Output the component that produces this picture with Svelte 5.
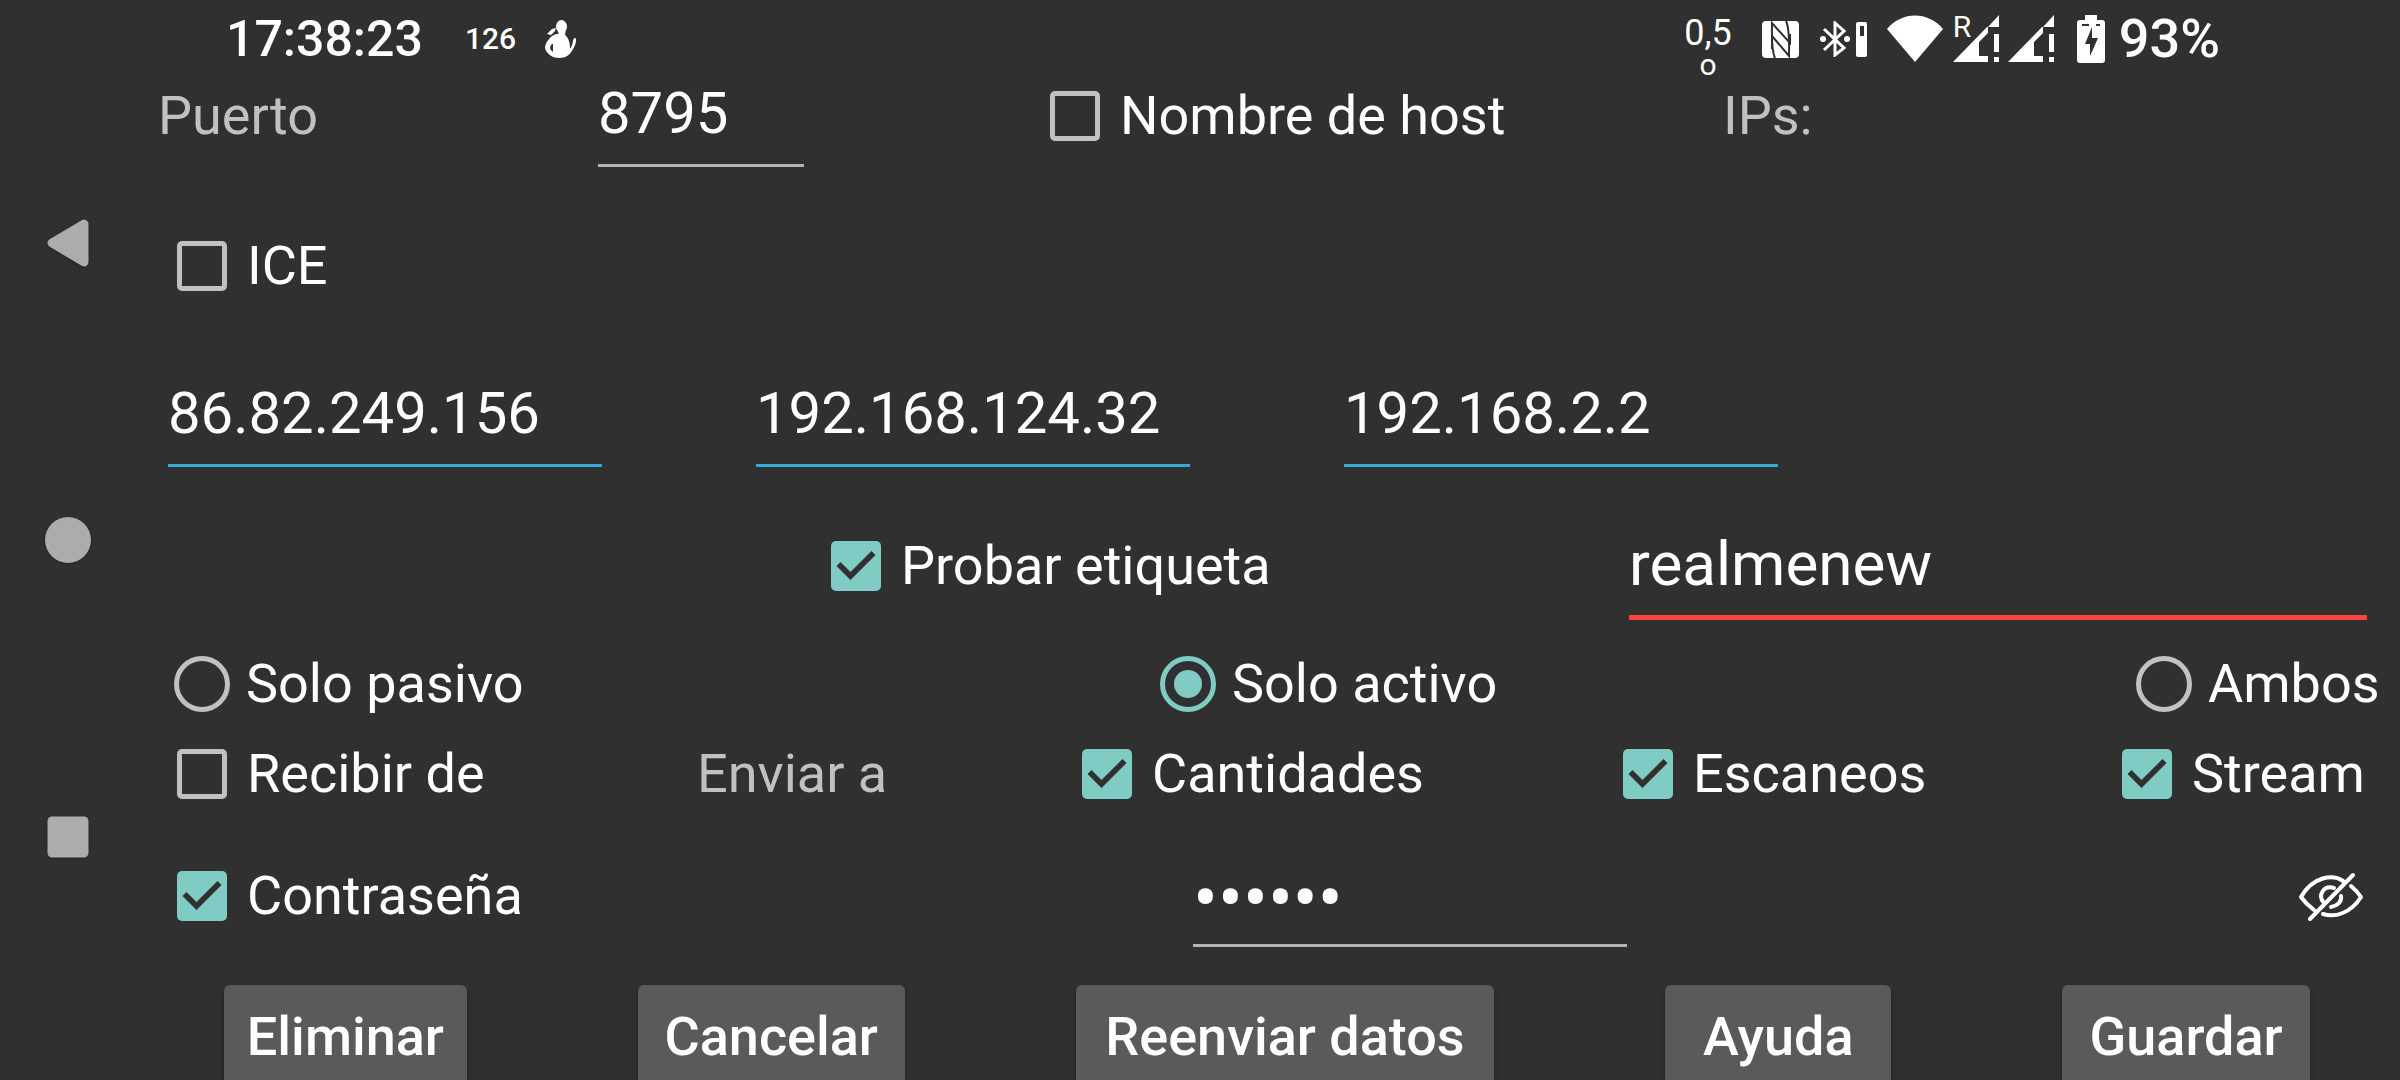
<script>
  let port = $state('8795');
  let hostname = $state(false);
  let ice = $state(false);
  let ips = $state(['86.82.249.156', '192.168.124.32', '192.168.2.2']);
  let testLabel = $state(true);
  let label = $state('realmenew');
  let mode = $state('active');
  let receive = $state(false);
  let amounts = $state(true);
  let scans = $state(true);
  let stream = $state(true);
  let usePassword = $state(true);
  let password = $state('secret');
  let reveal = $state(false);

  const modes = [
    { id: 'passive', text: 'Solo pasivo' },
    { id: 'active', text: 'Solo activo' },
    { id: 'both', text: 'Ambos' }
  ];
  const actions = ['Eliminar', 'Cancelar', 'Reenviar datos', 'Ayuda', 'Guardar'];
</script>

<div class="screen">
  <nav class="system-nav" aria-label="Sistema">
    <button aria-label="Atrás">
      <svg width="52" height="56" viewBox="0 0 52 56"><path d="M10 28 42 9v38z" /></svg>
    </button>
    <button aria-label="Inicio">
      <svg width="52" height="56" viewBox="0 0 52 56"><circle cx="26" cy="28" r="23" stroke="none" /></svg>
    </button>
    <button aria-label="Recientes">
      <svg width="52" height="56" viewBox="0 0 52 56"><path d="M10 12h32v32H10z" /></svg>
    </button>
  </nav>

  <main>
    <header class="status">
      <time>17:38:23</time>
      <span class="count">126</span>
      <svg class="cat" width="32" height="38" viewBox="0 0 32 38">
        <ellipse cx="17.500" cy="6.500" rx="5.500" ry="6.500" />
        <path d="M13 8h9l-1 7h-6z" />
        <path d="M12 14C6 16 1 23 1 28c1 5 7 10 14 10 7 0 11-3 14-9 3-4 4-11 2-11-3 0-1 6-5 11 0-8-2-12-6-15z" />
        <path d="M3 14 8 9l4-1-1 3-4 4z" />
        <path d="M8 24c-3 3-2 6 1 8V24z" fill="#303030" />
      </svg>

      <div class="speed"><span>0,5</span><span class="unit">o</span></div>
      <svg class="nfc" width="38" height="38" viewBox="0 0 38 38">
        <rect width="37" height="37" x="0" y="1" rx="4" />
        <path d="M13 38C9 30 10 12 10 3L28 23V14M24 1C28 9 27 26 27 36L10 16v13" fill="none" stroke="#303030" stroke-width="2" />
      </svg>
      <svg class="bt" width="48" height="36" viewBox="0 0 48 36">
        <path d="M4 8 24 27 15 34V2l9 8L4 29" fill="none" stroke="#fff" stroke-width="3" />
        <circle cx="3" cy="18" r="3" /><circle cx="27" cy="18" r="3" />
        <rect x="36" y="1" width="11" height="35" rx="2" />
        <path d="M40 5h4v10h-4z" fill="#303030" />
      </svg>
      <svg class="wifi" width="56" height="48" viewBox="0 0 56 48"><path d="M0 14C15-4 41-4 56 14L28 47z" /></svg>
      <div class="signal roaming">
        <span>R</span>
        <svg width="48" height="48" viewBox="0 0 48 48">
          <path d="M0 47 34 12h1v6L26 27v14h9v6zM46 0v12H35zM41 19h5v18h-5zM41 42h5v5h-5z" />
        </svg>
      </div>
      <div class="signal">
        <svg width="48" height="48" viewBox="0 0 48 48">
          <path d="M0 47 34 12h1v6L26 27v14h9v6zM46 0v12H35zM41 19h5v18h-5zM41 42h5v5h-5z" />
        </svg>
      </div>
      <svg class="battery" width="30" height="48" viewBox="0 0 30 48">
        <path d="M9 0h12v5h5q3 0 3 3v37q0 3-3 3H4q-3 0-3-3V8q0-3 3-3h5z" />
        <path d="M6 9h7v2H6zM20 9h4v2h-4zM16 12 9 29h5v12l8-18h-6z" fill="#303030" />
      </svg>
      <span class="percent">93%</span>
    </header>

    <form onsubmit={(e) => e.preventDefault()}>
      <div class="row port-row">
        <label class="caption" for="port">Puerto</label>
        <input id="port" class="field port" type="text" bind:value={port} />
        <label class="choice"><input type="checkbox" bind:checked={hostname} />Nombre de host</label>
        <span class="caption">IPs:</span>
      </div>

      <div class="row">
        <label class="choice"><input type="checkbox" bind:checked={ice} />ICE</label>
      </div>

      <div class="row ip-row">
        {#each ips as _, i}
          <input class="field ip" type="text" aria-label={`IP ${i + 1}`} bind:value={ips[i]} />
        {/each}
      </div>

      <div class="row label-row">
        <label class="choice"><input type="checkbox" bind:checked={testLabel} />Probar etiqueta</label>
        <input class="field name" type="text" aria-label="Etiqueta" spellcheck="false" bind:value={label} />
      </div>

      <div class="row mode-row">
        {#each modes as m}
          <label class="choice radio"><input type="radio" name="mode" value={m.id} bind:group={mode} />{m.text}</label>
        {/each}
      </div>

      <div class="row send-row">
        <label class="choice"><input type="checkbox" bind:checked={receive} />Recibir de</label>
        <span class="caption">Enviar a</span>
        <label class="choice"><input type="checkbox" bind:checked={amounts} />Cantidades</label>
        <label class="choice"><input type="checkbox" bind:checked={scans} />Escaneos</label>
        <label class="choice"><input type="checkbox" bind:checked={stream} />Stream</label>
      </div>

      <div class="row password-row">
        <label class="choice"><input type="checkbox" bind:checked={usePassword} />Contraseña</label>
        <input class="field secret" type={reveal ? 'text' : 'password'} aria-label="Contraseña" bind:value={password} />
        <button class="eye" type="button" aria-label="Mostrar contraseña" onclick={() => (reveal = !reveal)}>
          <svg width="64" height="50" viewBox="0 0 64 50">
            <g fill="none" stroke="#fff" stroke-width="4" stroke-linecap="round" stroke-linejoin="round">
              <path d="M11 48 54 4" />
              <path d="M15 39Q7 33 2 26C14 5 34 3 44 10" />
              <path d="M52 15Q58 20 62 26C52 42 36 47 24 43" />
              <path d="M25 32C18 24 25 14 35 17" />
              <path d="M42 25c1 6-4 10-10 11" />
            </g>
          </svg>
        </button>
      </div>

      <div class="actions">
        {#each actions as action}
          <button type="button">{action}</button>
        {/each}
      </div>
    </form>
  </main>
</div>

<style>
  :global(body) {
    background: #303030;
  }
  .screen {
    display: grid;
    grid-template: 100vh / 158px minmax(0, 1fr);
    overflow: hidden;
    background: #303030;
    color: #fff;
    font-family: Roboto, 'Noto Sans', sans-serif;
    font-size: 54px;
    white-space: nowrap;
  }
  button,
  input {
    margin: 0;
    padding: 0;
    border: 0;
    background: none;
    color: inherit;
    font: inherit;
  }
  svg {
    display: block;
    flex: none;
    fill: #fff;
  }

  .system-nav {
    display: flex;
    flex-direction: column;
    padding: 94px 22px 94px 0;
  }
  .system-nav button {
    flex: 1;
    display: grid;
    place-items: center;
  }
  .system-nav svg {
    fill: #acacac;
    stroke: #acacac;
    stroke-width: 9;
    stroke-linejoin: round;
    filter: drop-shadow(0 1px 1px #222);
  }

  main {
    min-width: 0;
  }
  .status {
    display: flex;
    align-items: center;
    height: 75px;
    box-sizing: border-box;
    padding: 3px 180px 0 68px;
  }
  time,
  .percent {
    line-height: 80px;
    font-weight: 500;
  }
  time {
    font-size: 50px;
  }
  .count {
    margin: 0 28px 0 42px;
    font-size: 30px;
    line-height: 80px;
    font-weight: 500;
  }
  .speed {
    display: flex;
    flex-direction: column;
    align-self: flex-start;
    align-items: center;
    margin-left: auto;
    padding-top: 14px;
    font-size: 36px;
    line-height: 32px;
  }
  .unit {
    font-size: 30px;
  }
  .nfc {
    margin-left: 30px;
  }
  .bt {
    margin-left: 20px;
  }
  .wifi {
    margin-left: 19px;
  }
  .signal {
    display: grid;
    margin-left: 7px;
  }
  .signal > * {
    grid-area: 1 / 1;
  }
  .roaming {
    margin-left: 10px;
  }
  .signal span {
    font-size: 30px;
    line-height: 24px;
  }
  .battery {
    margin: 0 13px 0 20px;
  }

  .row {
    display: grid;
    align-items: start;
    height: 150px;
  }
  .port-row {
    grid-template-columns: 440fr 433fr 692fr 677fr;
  }
  .ip-row {
    grid-template-columns: 588fr 588fr 1056fr;
    padding-left: 10px;
  }
  .label-row {
    grid-template-columns: 654fr 817fr 738fr;
    height: 118px;
    padding-right: 33px;
  }
  .label-row .choice {
    grid-column: 2;
  }
  .mode-row {
    grid-template-columns: 986fr 976fr 280fr;
    height: 90px;
  }
  .send-row {
    grid-template-columns: 539fr 366fr 541fr 499fr 297fr;
    height: 122px;
  }
  .password-row {
    grid-template-columns: 1035fr 1106fr 101fr;
    height: 130px;
  }

  .caption {
    color: #c1c1c1;
    line-height: 82px;
  }
  .choice {
    display: flex;
    align-items: center;
    gap: 20px;
    padding-left: 19px;
    line-height: 82px;
  }
  .radio {
    gap: 16px;
    padding-left: 16px;
  }
  .choice input {
    appearance: none;
    flex: none;
    display: grid;
    place-items: center;
    box-sizing: border-box;
    width: 50px;
    height: 50px;
    border: 5px solid #c1c1c1;
    border-radius: 5px;
  }
  .choice input:checked {
    border-color: #80cbc4;
  }
  .choice input[type='checkbox']:checked {
    border: 0;
    background: #80cbc4;
  }
  .choice input[type='checkbox']:checked::before {
    content: '';
    width: 50px;
    height: 50px;
    background: #303030;
    clip-path: polygon(39% 78%, 11% 50%, 19% 42%, 39% 62%, 81% 20%, 89% 28%);
  }
  .choice input[type='radio'] {
    width: 56px;
    height: 56px;
    border-radius: 50%;
  }
  .choice input[type='radio']:checked::before {
    content: '';
    width: 28px;
    height: 28px;
    border-radius: 50%;
    background: #80cbc4;
  }

  .field {
    box-sizing: border-box;
    width: 434px;
    height: 92px;
    padding: 0 0 13px;
    border-bottom: 3px solid #b4b4b4;
    border-radius: 0;
    outline: none;
    font-size: 58px;
    line-height: 76px;
  }
  .port {
    width: 206px;
  }
  .ip {
    border-color: #33a9d6;
  }
  .name {
    width: 100%;
    height: 95px;
    padding-bottom: 14px;
    border-bottom: 5px solid #ff4540;
    font-size: 62px;
  }
  .secret[type='password'] {
    padding: 4px 0 9px;
    font-size: 74px;
  }
  .eye {
    display: grid;
    align-items: center;
    height: 82px;
  }

  .actions {
    display: grid;
    grid-template-columns: 243fr 267fr 419fr 226fr 248fr;
    column-gap: 171px;
    padding: 0 90px 0 66px;
  }
  .actions button {
    height: 102px;
    border-radius: 6px;
    background: #5a5a5c;
    box-shadow: 0 3px 5px #0005;
    font-weight: 500;
  }
</style>
